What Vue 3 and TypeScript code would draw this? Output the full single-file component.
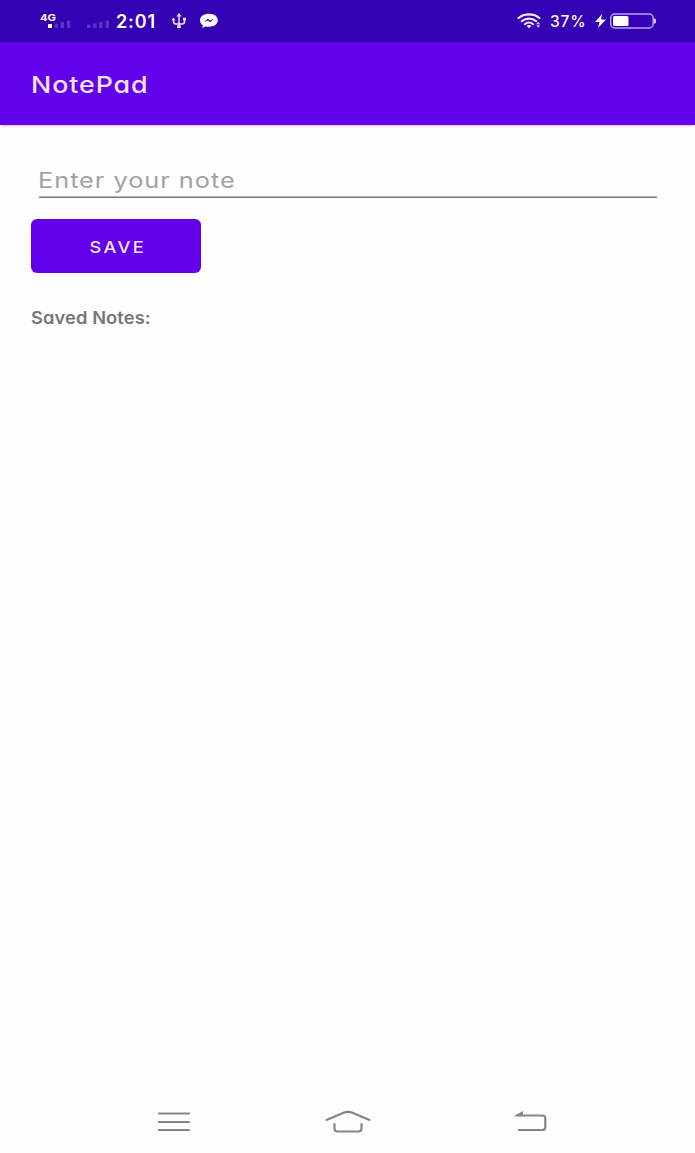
<script setup lang="ts">
import { ref } from 'vue'

const note = ref('')
const notes = ref<string[]>([])

function save(): void {
  const text = note.value.trim()
  if (!text) return
  notes.value.push(text)
  note.value = ''
}
</script>

<template>
  <div class="screen">
    <header class="status">
      <svg class="signals" width="70" height="42" viewBox="0 0 70 42">
        <text class="network" x="0" y="20.5" textLength="16" lengthAdjust="spacingAndGlyphs">4G</text>
        <rect x="8" y="24" width="4" height="4" rx="0.6" fill="#fff" />
        <g fill="#5636c6">
          <rect x="14.5" y="23.5" width="3.5" height="4.5" />
          <rect x="20.5" y="22" width="3.5" height="6" />
          <rect x="27" y="20.5" width="3.5" height="7.5" />
          <rect x="47" y="24.5" width="3.5" height="3.5" />
          <rect x="53" y="23.5" width="3.5" height="4.5" />
          <rect x="59" y="22" width="3.5" height="6" />
          <rect x="65.5" y="20.5" width="3.5" height="7.5" />
        </g>
      </svg>
      <span class="clock">2:01</span>
      <svg class="usb" width="16" height="16" viewBox="0 0 16 16" fill="none" stroke="#eee5ff" stroke-width="1.5">
        <path d="M8 2V14M2.5 6V8.5Q2.5 11 5 11H11Q13.5 11 13.5 8.5V6" />
        <path d="M8 0L10.5 3.5H5.5ZM6.2 12.2H9.8V15H6.2Z" fill="#eee5ff" stroke="none" />
        <path d="M.5 7.2L2.5 4.6L4.5 7.2ZM12 4.8H15V7.5H12Z" fill="#eee5ff" stroke="none" />
      </svg>
      <svg class="messenger" width="20" height="16" viewBox="0 0 20 16">
        <path d="M10 .8C4.9.8 1 3.5 1 7.2C1 9.3 2 11 3.8 12.2L3.4 15L6.3 13.4C7.5 13.7 8.7 13.8 10 13.8C15.1 13.8 18.8 11 18.8 7.3S15.1.8 10 .8Z" fill="#fff" />
        <path d="M5 9L8.8 5.7L11 7.5L15 5.8L11.2 9.2L9 7.5Z" fill="#3500b3" />
      </svg>
      <span class="spacer"></span>
      <svg class="wifi" width="25" height="16" viewBox="0 0 25 16" fill="none" stroke="#f4edff" stroke-width="2.1" stroke-linecap="round">
        <path d="M1.5 5C7.3.2 16.7.2 22.5 5M4.7 8.2C9 4.7 15 4.7 19.3 8.2M7.8 11.2C10.4 9.1 13.6 9.1 16.2 11.2" />
        <path d="M9.5 12.7Q12 11.2 14.5 12.7L12 15.2Z" fill="#f4edff" stroke="none" />
        <path d="M19.2 11.3L21.2 8.8L23.2 11.3ZM19.2 12.3L21.2 14.8L23.2 12.3Z" fill="#d8caff" stroke="none" />
      </svg>
      <span class="percent">37%</span>
      <svg class="battery" width="62" height="18" viewBox="0 0 62 18">
        <path d="M8 2L1 10H5.5L4 16L12 7.5H7Z" fill="#fff" />
        <rect x="16.7" y="2" width="42.5" height="14" rx="4" fill="none" stroke="#b8a5ef" stroke-width="1.5" />
        <rect x="19" y="4" width="15.5" height="10" rx="1.5" fill="#fff" />
        <path d="M60 6.5H60.5Q62 6.5 62 8V10Q62 11.5 60.5 11.5H60Z" fill="#d8caff" />
      </svg>
    </header>

    <div class="appbar"><h1>NotePad</h1></div>

    <main>
      <div class="field">
        <input v-model="note" type="text" placeholder="Enter your note" />
      </div>
      <button class="save" type="button" @click="save"><span>SAVE</span></button>
      <h2>Saved Notes:</h2>
      <p v-for="(item, i) in notes" :key="i" class="item">{{ item }}</p>
    </main>

    <nav>
      <svg width="34" height="26" viewBox="0 0 34 26" fill="none" stroke="#858585" stroke-width="2.1" stroke-linecap="round">
        <path d="M2 4.5H32M2 13H32M2 21H32" />
      </svg>
      <svg class="home" width="46" height="26" viewBox="0 0 46 26" fill="none" stroke="#858585" stroke-width="2.2" stroke-linecap="round" stroke-linejoin="round">
        <path d="M1.5 11L18 3.9Q23 1.8 28 3.9L44.5 11M9.5 15V19.5Q9.5 22.5 12.5 22.5H33.5Q36.5 22.5 36.5 19.5V15" />
      </svg>
      <svg class="back" width="34" height="26" viewBox="0 0 34 26" fill="none" stroke="#858585" stroke-width="2.2" stroke-linecap="round">
        <path d="M4 6.5H29.5Q32.3 6.5 32.3 9.3V18.2Q32.3 21 29.5 21H6" />
        <path d="M0 7.5L10 2V6.5Z" fill="#858585" stroke="none" />
      </svg>
    </nav>
  </div>
</template>

<style>
body {
  margin: 0;
}
</style>

<style scoped>
.screen {
  display: flex;
  flex-direction: column;
  height: 1153px;
  overflow: hidden;
  background: #fefefe;
  font-family: Inter, "DejaVu Sans", sans-serif;
  font-feature-settings: "cv11" 1;
}
.status {
  display: flex;
  align-items: center;
  flex: none;
  height: 42px;
  padding: 0 39px 0 40px;
  box-sizing: border-box;
  background: #3500b3;
  color: #fff;
}
.status svg {
  flex: none;
}
.network {
  font-size: 9.5px;
  font-weight: 700;
  fill: #fff;
}
.clock {
  width: 48px;
  margin: 1px 0 0 6px;
  font-size: 18px;
  font-weight: 600;
  letter-spacing: 0.9px;
  line-height: 42px;
}
.usb {
  margin-left: 7px;
}
.messenger {
  margin-left: 11.5px;
}
.spacer {
  flex: 1;
}
.percent {
  width: 38px;
  margin: 1px 6px 0 8px;
  font-size: 15.5px;
  font-weight: 500;
  letter-spacing: 0.8px;
  white-space: nowrap;
}
.appbar {
  display: flex;
  align-items: center;
  flex: none;
  height: 83px;
  padding-left: 31px;
  background: #6200ea;
  box-shadow: 0 2px 2px -1px #d9b8f5;
}
h1 {
  margin: 3px 0 0;
  color: #f5e2ff;
  font-size: 23.5px;
  font-weight: 500;
  letter-spacing: 0.8px;
  line-height: 30px;
  transform: scaleX(1.14);
  transform-origin: left;
}
main {
  display: flex;
  flex: 1;
  flex-direction: column;
  align-items: flex-start;
  padding: 36px 31px 0;
}
.field {
  width: 618px;
  height: 37px;
  margin-left: 7.5px;
  box-sizing: border-box;
  border-bottom: 1px solid #777;
  box-shadow: inset 0 -1px #b5b5b5;
}
.field input {
  display: block;
  width: 522px;
  height: 36px;
  margin-left: -1px;
  padding: 1px 0 0;
  box-sizing: border-box;
  border: 0;
  outline: 0;
  background: transparent;
  color: #333;
  font: 400 21.5px Inter, "DejaVu Sans", sans-serif;
  font-feature-settings: "cv11" 1;
  letter-spacing: 0.8px;
  transform: scaleX(1.18);
  transform-origin: left;
}
.field input::placeholder {
  color: #a2a2a2;
  opacity: 1;
}
.save {
  display: flex;
  align-items: center;
  justify-content: center;
  width: 170px;
  height: 53.5px;
  margin-top: 21px;
  padding: 2px 0 0 3px;
  border: 0;
  border-radius: 6px;
  background: #6200ea;
  color: #f8e5ff;
  font: 500 16.5px Inter, "DejaVu Sans", sans-serif;
  letter-spacing: 2.2px;
}
.save span {
  transform: scaleX(1.1);
}
h2 {
  margin: 33.5px 0 0;
  color: #777;
  font-size: 17px;
  font-weight: 600;
  letter-spacing: 0.1px;
  line-height: 24px;
  transform: scaleX(1.075);
  transform-origin: left;
}
.item {
  margin: 12px 0 0;
  color: #666;
  font-size: 17px;
}
nav {
  display: flex;
  flex: none;
  height: 44px;
  padding-left: 157px;
}
.home {
  margin-left: 134px;
}
.back {
  margin-left: 142px;
}
</style>
